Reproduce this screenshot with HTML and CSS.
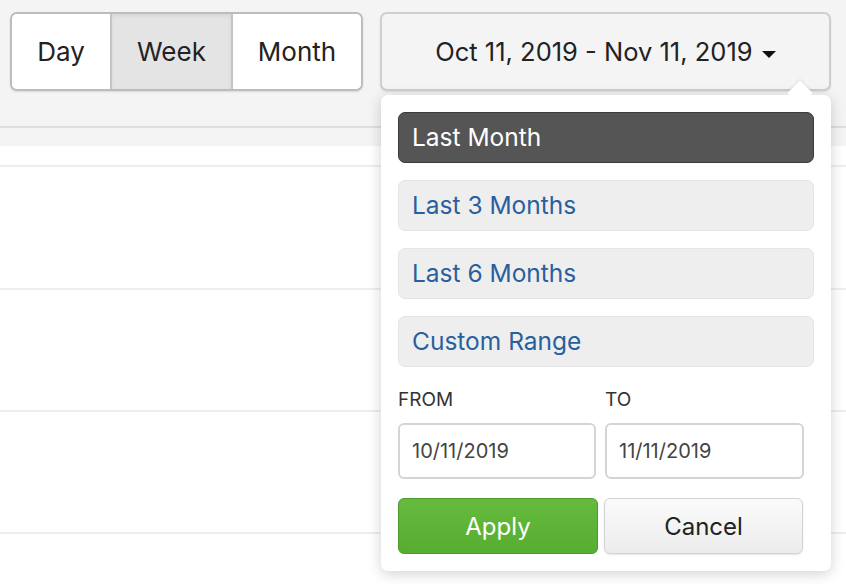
FILE: index.html
```html
<!DOCTYPE html>
<html lang="en">
<head>
    <meta charset="UTF-8">
    <meta name="viewport" content="width=device-width, initial-scale=1.0">
    <title>Date Range</title>
    <link rel="stylesheet" href="styles.css">
</head>
<body>
    <div class="toolbar">
        <div class="btn-group">
            <button class="seg">Day</button>
            <button class="seg active">Week</button>
            <button class="seg">Month</button>
        </div>
        <div class="range-picker">
            <button class="range-toggle">Oct 11, 2019 - Nov 11, 2019 <span class="caret"></span></button>
            <div class="range-menu">
                <ul class="ranges">
                    <li class="selected">Last Month</li>
                    <li>Last 3 Months</li>
                    <li>Last 6 Months</li>
                    <li>Custom Range</li>
                </ul>
                <div class="inputs">
                    <div class="field">
                        <label>FROM</label>
                        <input type="text" value="10/11/2019">
                    </div>
                    <div class="field">
                        <label>TO</label>
                        <input type="text" value="11/11/2019">
                    </div>
                </div>
                <div class="actions">
                    <button class="apply">Apply</button>
                    <button class="cancel">Cancel</button>
                </div>
            </div>
        </div>
    </div>
    <div class="table">
        <div class="row head"></div>
        <div class="row"></div>
        <div class="row"></div>
        <div class="row"></div>
        <div class="row"></div>
    </div>
</body>
</html>
```

FILE: styles.css
```css
body {
    margin: 0;
    background-color: #f4f4f4;
    font-family: Inter, "Noto Sans", sans-serif;
    color: #222;
    overflow: hidden;
}
.toolbar {
    display: flex;
    align-items: flex-start;
    gap: 17px;
    padding: 12px 10px 35px;
    border-bottom: 2px solid #dedede;
}
.btn-group {
    display: flex;
    height: 79px;
    border: 2px solid #bcbcbc;
    border-radius: 7px;
    overflow: hidden;
    box-sizing: border-box;
    box-shadow: 0 1px 2px rgba(0,0,0,0.12);
}
.seg {
    font-family: inherit;
    font-size: 26px;
    color: #222;
    background: #fff;
    border: none;
    border-left: 2px solid #c4c4c4;
    padding: 0;
    height: 100%;
}
.seg:first-child {
    border-left: none;
    width: 98px;
}
.seg:nth-child(2) {
    width: 121px;
}
.seg:nth-child(3) {
    width: 130px;
}
.seg.active {
    background: #e4e4e4;
    box-shadow: inset 0 2px 4px rgba(0,0,0,0.06);
}
.range-picker {
    position: relative;
}
.range-toggle {
    width: 451px;
    height: 79px;
    font-family: inherit;
    font-size: 25.5px;
    color: #222;
    background: #f4f4f4;
    border: 2px solid #cfcfcf;
    border-radius: 7px;
    box-shadow: 0 1px 2px rgba(0,0,0,0.1);
}
.caret {
    display: inline-block;
    width: 0;
    height: 0;
    border-left: 7px solid transparent;
    border-right: 7px solid transparent;
    border-top: 7px solid #111;
    vertical-align: middle;
    margin-left: 2px;
}
.range-menu {
    position: absolute;
    top: 83px;
    left: 1px;
    width: 450px;
    height: 476px;
    box-sizing: border-box;
    background: #fff;
    border-radius: 7px;
    box-shadow: 0 3px 14px rgba(0,0,0,0.18);
    padding: 17px 17px 0;
    z-index: 10;
}
.range-menu::before {
    content: "";
    position: absolute;
    top: -11px;
    right: 22px;
    width: 18px;
    height: 18px;
    background: #fff;
    transform: rotate(45deg);
    box-shadow: -1px -1px 2px rgba(0,0,0,0.08);
}
.ranges {
    list-style: none;
    margin: 0;
    padding: 0;
    display: flex;
    flex-direction: column;
    gap: 17px;
    position: relative;
}
.ranges li {
    height: 51px;
    box-sizing: border-box;
    padding-left: 13px;
    line-height: 48px;
    font-size: 24.5px;
    color: #2a5f9e;
    background: #eee;
    border: 1px solid #e5e5e5;
    border-radius: 7px;
}
.ranges li.selected {
    background: #555;
    border-color: #3c3c3c;
    color: #fff;
}
.inputs {
    display: flex;
    gap: 9px;
    margin-top: 21px;
}
.field {
    display: flex;
    flex-direction: column;
    width: 198px;
}
.field label {
    font-size: 19px;
    color: #333;
    line-height: 24px;
    margin-bottom: 11px;
}
.field input {
    height: 56px;
    box-sizing: border-box;
    border: 2px solid #d4d4d4;
    border-radius: 6px;
    padding: 0 12px;
    font-family: inherit;
    font-size: 20px;
    color: #444;
}
.field:first-child input {
    width: 198px;
}
.field:last-child input {
    width: 199px;
}
.actions {
    display: flex;
    gap: 6px;
    margin-top: 19px;
}
.actions button {
    height: 56px;
    font-family: inherit;
    font-size: 24px;
    border-radius: 6px;
}
.apply {
    width: 200px;
    color: #fff;
    background: linear-gradient(#66bb3e, #56ad30);
    border: 1px solid #4d9a2c;
}
.cancel {
    width: 199px;
    color: #222;
    background: linear-gradient(#fbfbfb, #ececec);
    border: 1px solid #d2d2d2;
    box-shadow: 0 1px 2px rgba(0,0,0,0.1);
}
.table {
    margin-top: 18px;
    background: #fff;
}
.row {
    height: 120px;
    border-bottom: 2px solid #eeeeee;
}
.row.head {
    height: 19px;
}
.row:nth-child(2) {
    height: 121px;
}
```
